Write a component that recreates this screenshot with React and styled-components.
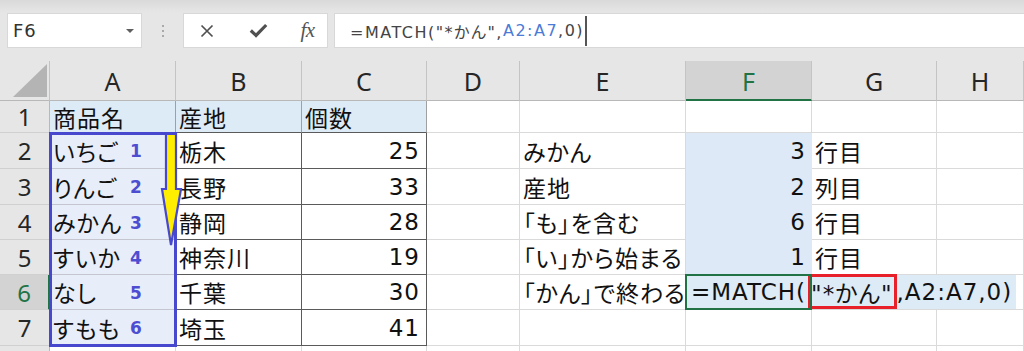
import React from "react";
import styled, { createGlobalStyle } from "styled-components";

const GREEN = "#217346";
const DARK = "#5a5a5a";
const GRID = "#dadada";
const HEAD_BG = "#ddebf7";
const A_BG = "#e8eef9";
const SEL_BG = "#dde9f6";

const GlobalStyle = createGlobalStyle`
  html, body { margin: 0; padding: 0; background: #fff; }
  body {
    width: 1024px; height: 351px; overflow: hidden;
    font-family: "DejaVu Sans", "Noto Sans CJK JP", sans-serif;
  }
`;

const Window = styled.div`
  width: 1024px;
  height: 351px;
  overflow: hidden;
  display: flex;
  flex-direction: column;
  background: #e6e6e6;
`;

const Bar = styled.div`
  flex: 0 0 61px;
  box-sizing: border-box;
  padding: 13px 0 0 7px;
  display: flex;
  align-items: flex-start;
  background: linear-gradient(#d9d9d9 0, #e3e3e3 9px, #e6e6e6 13px);
`;

const Field = styled.div`
  height: 35px;
  box-sizing: border-box;
  background: #fff;
  border: 1px solid #d8d8d8;
  display: flex;
  align-items: center;
`;

const NameBox = styled(Field)`
  width: 135px;
  padding: 0 7px 0 5px;
  justify-content: space-between;
  font-size: 18px;
  letter-spacing: 1px;
  color: #333;
`;

const Caret = styled.span`
  width: 0;
  height: 0;
  border-left: 4px solid transparent;
  border-right: 4px solid transparent;
  border-top: 4px solid #5f5f5f;
`;

const Grip = styled.div`
  width: 41px;
  height: 35px;
  display: flex;
  flex-direction: column;
  align-items: center;
  justify-content: center;
  gap: 3px;
`;

const GripDot = styled.span`
  display: block;
  width: 2px;
  height: 2px;
  background: #a9a9a9;
`;

const Buttons = styled(Field)`
  width: 145px;
  display: grid;
  grid-template-columns: 46px 56px 43px;
  justify-items: center;
  align-items: center;
`;

const Fx = styled.span`
  font-family: "Liberation Serif", "DejaVu Serif", serif;
  font-style: italic;
  font-size: 21px;
  color: #555;
  letter-spacing: -0.5px;
`;

const FormulaInput = styled(Field)`
  flex: 1;
  margin-left: 6px;
  padding-left: 15px;
  border-right: none;
  font-size: 16px;
  letter-spacing: 1.5px;
  color: #444;
  white-space: nowrap;
  font-feature-settings: "palt";
`;

const Ref = styled.span`
  color: #4a7bd6;
`;

const Caret2 = styled.span`
  display: inline-block;
  width: 2px;
  height: 30px;
  margin-left: 1px;
  background: #555;
`;

const Sheet = styled.div`
  position: relative;
  flex: 1;
  display: grid;
  grid-template-columns: 50px 126px 126px 125px 93px 166px 126px 125px 1fr;
  grid-template-rows: 40px 32px 36px 36px 35px 35px 35px 36px 35px;
  background: #fff;
`;

const Corner = styled.div`
  box-sizing: border-box;
  background: #e6e6e6;
  border-right: 1px solid #c4c4c4;
  border-bottom: 1px solid #b8b8b8;
  display: flex;
  justify-content: flex-end;
  align-items: flex-end;
  padding: 0 2px 3px 0;
`;

const Triangle = styled.div`
  width: 34px;
  height: 33px;
  background: #b4b4b4;
  clip-path: polygon(100% 0, 100% 100%, 0 100%);
`;

const ColHead = styled.div`
  box-sizing: border-box;
  display: flex;
  align-items: center;
  justify-content: center;
  background: ${(p) => (p.$active ? "#d3d3d3" : "#e6e6e6")};
  color: ${(p) => (p.$active ? GREEN : "#262626")};
  border-right: 1px solid #c4c4c4;
  border-bottom: ${(p) => (p.$active ? `2px solid ${GREEN}` : "1px solid #b8b8b8")};
  font-family: "Noto Sans", sans-serif;
  font-size: 25px;
  padding-top: 1px;
`;

const RowHead = styled.div`
  box-sizing: border-box;
  display: flex;
  align-items: center;
  justify-content: center;
  background: ${(p) => (p.$active ? "#d3d3d3" : "#e6e6e6")};
  color: ${(p) => (p.$active ? GREEN : "#262626")};
  border-right: ${(p) => (p.$active ? `2px solid ${GREEN}` : "1px solid #b8b8b8")};
  border-bottom: 1px solid #d0d0d0;
  font-family: "Noto Sans", sans-serif;
  font-size: 24px;
`;

const Cell = styled.div`
  position: relative;
  box-sizing: border-box;
  display: flex;
  align-items: center;
  justify-content: ${(p) => (p.$align === "right" ? "flex-end" : "flex-start")};
  padding: ${(p) => (p.$align === "right" ? `0 ${p.$pr ?? 6}px 0 0` : "0 0 0 3px")};
  background: ${(p) => p.$bg || "#fff"};
  border-right: 1px solid ${(p) => p.$r || GRID};
  border-bottom: 1px solid ${(p) => p.$b || GRID};
  font-size: 23px;
  letter-spacing: 1px;
  color: #111;
  white-space: nowrap;
  font-feature-settings: "palt";
`;

const Label = styled.span`
  display: inline-block;
  width: 76px;
`;

const Badge = styled.span`
  display: inline-block;
  width: 14px;
  line-height: 1;
  text-align: center;
  font-weight: bold;
  font-size: 17px;
  letter-spacing: 0;
  color: #4d4dd1;
  margin-top: 2px;
`;

const EditCell = styled(Cell)`
  grid-column: span 3;
  padding: 0;
  align-items: stretch;
`;

const EditText = styled.div`
  display: flex;
  align-items: center;
  padding: 0 4px 0 5px;
  background: ${HEAD_BG};
`;

const RedBox = styled.span`
  align-self: stretch;
  display: flex;
  align-items: center;
  box-sizing: border-box;
  border: 3px solid #e8202a;
  margin: -1px 0 0 2px;
  padding-right: 1px;
`;

const ActiveFrame = styled.div`
  position: absolute;
  left: -1px;
  top: -1px;
  width: 127px;
  bottom: -1px;
  box-sizing: border-box;
  border: 2px solid ${GREEN};
  pointer-events: none;
`;

const RangeBox = styled.div`
  position: absolute;
  left: 49px;
  top: 71px;
  width: 128px;
  height: 215px;
  box-sizing: border-box;
  border: 3px solid #4848cf;
  pointer-events: none;
`;

const Arrow = styled.svg`
  position: absolute;
  left: 155px;
  top: 70px;
  overflow: visible;
  pointer-events: none;
`;

const COLS = ["A", "B", "C", "D", "E", "F", "G", "H"];

const data = [
  ["いちご", 1, "栃木", 25, "みかん", 3, "行目"],
  ["りんご", 2, "長野", 33, "産地", 2, "列目"],
  ["みかん", 3, "静岡", 28, "「も」を含む", 6, "行目"],
  ["すいか", 4, "神奈川", 19, "「い」から始まる", 1, "行目"],
  ["なし", 5, "千葉", 30, "「かん」で終わる", null, null],
  ["すもも", 6, "埼玉", 41, null, null, null],
];

function HeaderRow() {
  return (
    <>
      <Corner>
        <Triangle />
      </Corner>
      {COLS.map((c) => (
        <ColHead key={c} $active={c === "F"}>
          {c}
        </ColHead>
      ))}
    </>
  );
}

function DataRow({ row, idx }) {
  const rowNo = idx + 2;
  const [a, n, b, c, e, f, g] = row;
  const editing = rowNo === 6;
  return (
    <>
      <RowHead $active={editing}>{rowNo}</RowHead>
      <Cell $bg={A_BG} $r={DARK} $b="#c5c5cf">
        <Label>{a}</Label>
        <Badge>{n}</Badge>
      </Cell>
      <Cell $r={DARK} $b={DARK}>{b}</Cell>
      <Cell $align="right" $r={DARK} $b={DARK}>{c}</Cell>
      <Cell />
      <Cell>{e}</Cell>
      {editing ? (
        <EditCell>
          <EditText>
            =MATCH(<RedBox>"*かん"</RedBox>,A2:A7,0)
          </EditText>
          <ActiveFrame />
        </EditCell>
      ) : (
        <>
          {f !== null ? (
            <Cell $align="right" $pr={5} $bg={SEL_BG} $r={SEL_BG} $b={SEL_BG}>
              {f}
            </Cell>
          ) : (
            <Cell />
          )}
          <Cell>{g}</Cell>
          <Cell />
        </>
      )}
    </>
  );
}

export default function App() {
  return (
    <Window>
      <GlobalStyle />
      <Bar>
        <NameBox>
          <span>F6</span>
          <Caret />
        </NameBox>
        <Grip>
          <GripDot />
          <GripDot />
          <GripDot />
        </Grip>
        <Buttons>
          <svg width="14" height="14" viewBox="0 0 14 14">
            <path d="M1.5 1.5 L12.5 12.5 M12.5 1.5 L1.5 12.5" stroke="#505050" strokeWidth="1.7" fill="none" />
          </svg>
          <svg width="19" height="15" viewBox="0 0 19 15">
            <path d="M1.8 7.5 L7 12.4 L17.2 2" stroke="#505050" strokeWidth="3.2" fill="none" />
          </svg>
          <Fx>fx</Fx>
        </Buttons>
        <FormulaInput>
          =MATCH("*かん",<Ref>A2:A7</Ref>,0)
          <Caret2 />
        </FormulaInput>
      </Bar>
      <Sheet>
        <HeaderRow />
        <RowHead>1</RowHead>
        <Cell $bg={HEAD_BG} $r="#a0a0a0" $b={DARK}>商品名</Cell>
        <Cell $bg={HEAD_BG} $r="#a0a0a0" $b={DARK}>産地</Cell>
        <Cell $bg={HEAD_BG} $r="#a0a0a0" $b={DARK}>個数</Cell>
        <Cell />
        <Cell />
        <Cell />
        <Cell />
        <Cell />
        {data.map((row, i) => (
          <DataRow key={i} row={row} idx={i} />
        ))}
        <RowHead />
        {COLS.map((c) => (
          <Cell key={c} />
        ))}
        <RangeBox />
        <Arrow width="30" height="120" viewBox="155 131 30 120">
          <path
            d="M166 134 L176 134 L176 189 L181 189 L171 245 L162 189 L166 189 Z"
            fill="#ffee00"
            stroke="#4848cf"
            strokeWidth="2.2"
            strokeLinejoin="miter"
          />
        </Arrow>
      </Sheet>
    </Window>
  );
}
